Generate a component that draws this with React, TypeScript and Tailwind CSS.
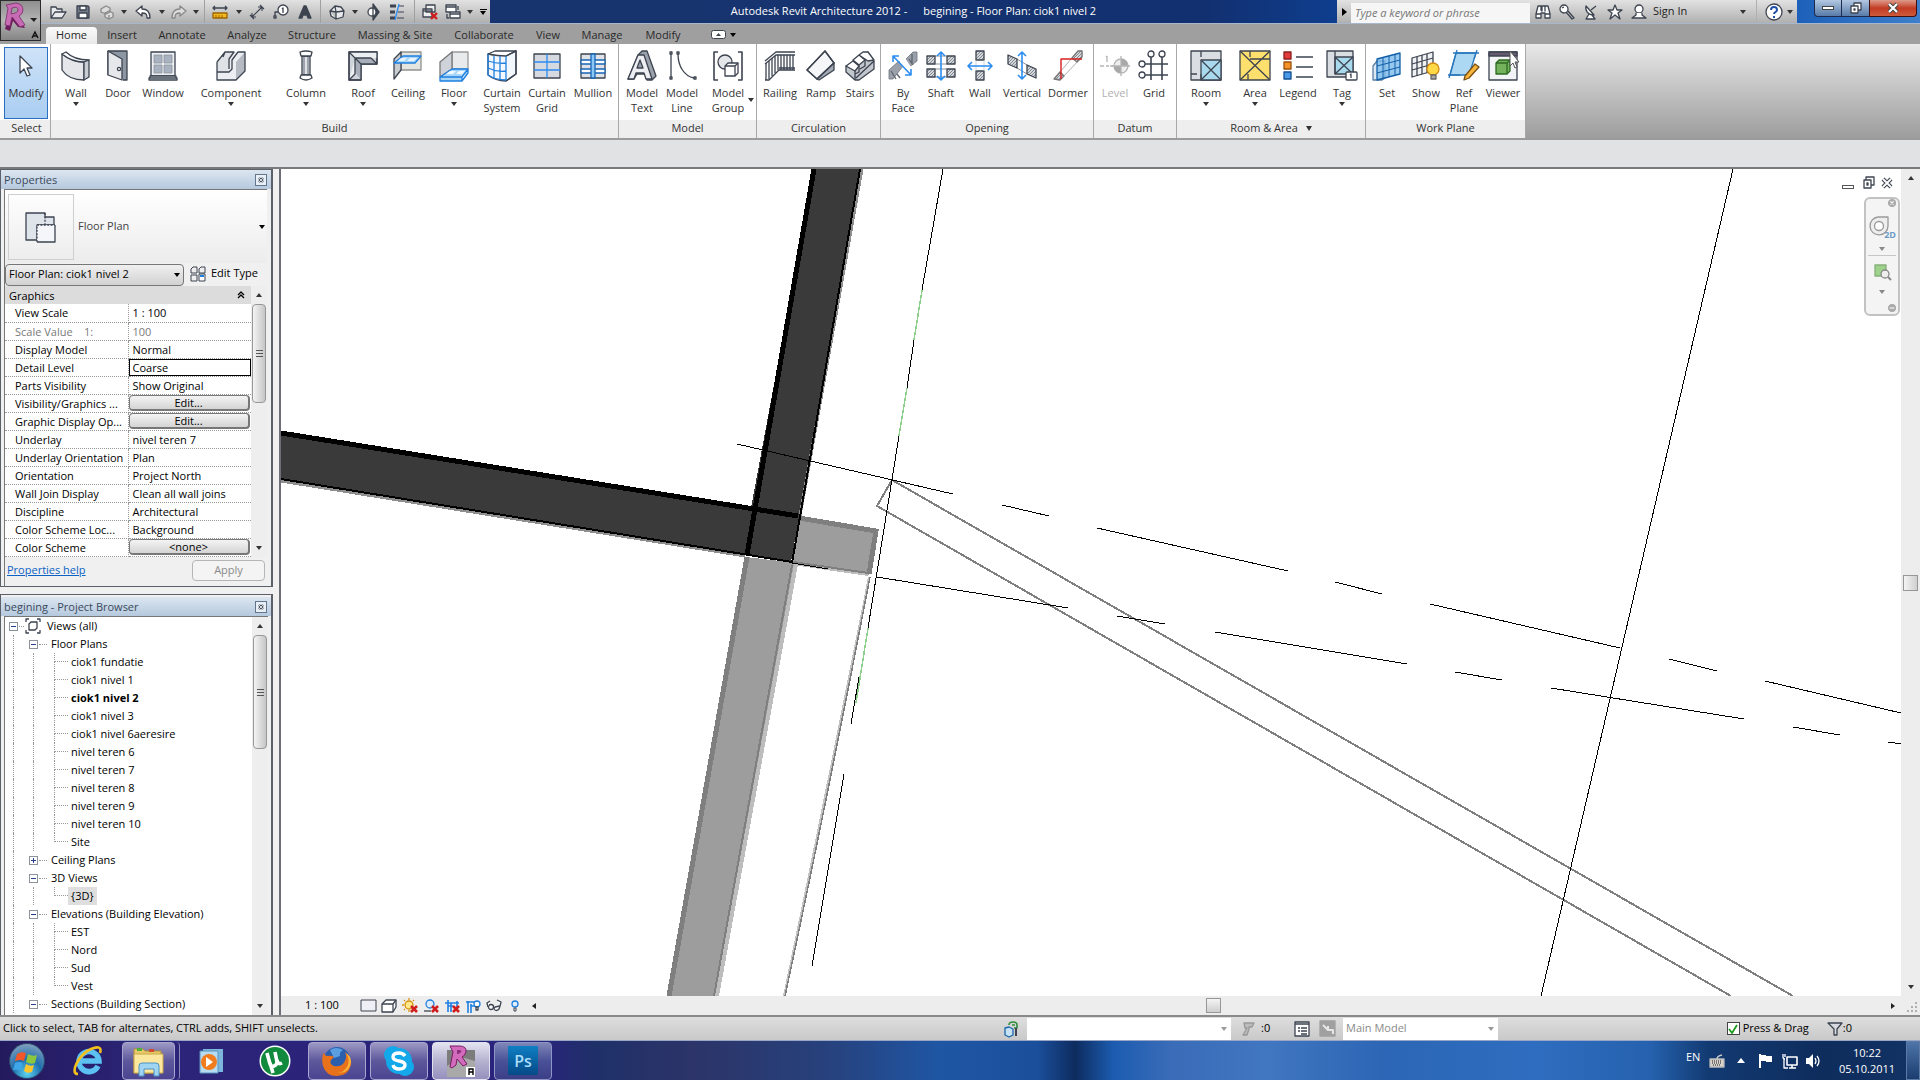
import React from 'react';

const INK = '#3d4450';
const BLUE = '#1f7fe0';

const Svg = ({ children, className = 'w-8 h-8', box = 32 }: { children: React.ReactNode; className?: string; box?: number }) => (
  <svg viewBox={`0 0 ${box} ${box}`} className={`${className} shrink-0 overflow-visible`} fill="none" stroke={INK} strokeWidth="1.3" strokeLinejoin="round" aria-hidden="true">
    {children}
  </svg>
);

const Caret = ({ className = 'border-t-[#333]' }: { className?: string }) => (
  <span className={`block w-0 h-0 shrink-0 border-x-[3px] border-x-transparent border-t-[4px] ${className}`} />
);

const hatch = (
  <pattern id="hatch" width="3" height="3" patternUnits="userSpaceOnUse">
    <rect width="3" height="3" fill="#d4d7dc" stroke="none" />
    <path d="M0 3L3 0" stroke="#6f757e" strokeWidth=".8" />
  </pattern>
);

const icons: Record<string, React.ReactNode> = {
  modify: <path d="M10 6v17l4-4 3 7 3-1-3-7h5z" fill="#fff" />,
  wall: (
    <>
      <path d="M2 4C7 8 14 12 24 12v18C14 30 6 26 2 20z" fill="#e4e6ea" />
      <path d="M2 4l4-2c5 5 12 8 23 8l-5 2C14 12 7 8 2 4z" fill="#fff" />
      <path d="M24 12l5-2v17l-5 3z" fill="#c9cdd4" />
    </>
  ),
  door: (
    <>
      <path d="M6 1h19v29h-4M6 1v24" fill="#8d96a3" />
      <path d="M6 1l14 8v21L6 25z" fill="#e6e8ec" />
      <circle cx="17" cy="19" r="1.6" fill="#fff" />
    </>
  ),
  window: (
    <>
      <rect x="4" y="2" width="24" height="24" fill="#eceef1" />
      <path d="M7 5h8v8H7zM17 5h8v8h-8zM7 15h8v8H7zM17 15h8v8h-8z" fill="#a9b2c0" stroke="#8c93a0" strokeWidth=".8" />
      <path d="M3 26h26v2H3zM2 28h28v2H2z" fill="#fff" />
    </>
  ),
  component: (
    <>
      <path d="M2 12L10 2h20v19l-9 9H2z" fill="#eceef1" stroke="none" />
      <path d="M30 2v19l-9 9V12z" fill="#b5bac3" stroke="none" />
      <path d="M2 12l8-10h9l-4 6v10l-3 3H2z" fill="#dfe2e7" stroke="none" />
      <path d="M2 12v18h19l9-9V2h-7l-6 8v9l-3 3H2M2 12l8-10h9l-5 7v10M10 2l-2 5" />
    </>
  ),
  column: (
    <>
      <path d="M12 6h8v19h-8z" fill="#dfe2e6" />
      <path d="M14 6v19M18 6v19" strokeWidth=".8" />
      <path d="M10 2q6-2 12 0l-1 4H11zM11 25h10l1 3q-6 4-12 0z" fill="#fff" />
    </>
  ),
  roof: (
    <>
      <path d="M2 2h28v12H14v16H2z" fill="#cfd3da" />
      <path d="M2 2l6 6h22V2zM8 8v16l-6 6" fill="#eceef1" stroke="none" />
      <path d="M14 14H30L24 8H8l6 6zM14 14v16l-6-8V8z" fill="#a9afb9" stroke="none" />
      <path d="M2 2h28v12H14v16H2zM2 2l12 12M30 14l-6-6h-16v16l-6 6" />
    </>
  ),
  ceiling: (
    <>
      <path d="M9 2h20v18H9z" fill="#e4e5e0" stroke="#8f9290" />
      <path d="M2 9L9 2v18l-7 9z" fill="#c9ccd1" />
      <path d="M2 13L11 6h18l-6 7z" fill="#a7d6f8" stroke={BLUE} />
      <path d="M9 8h6l-3 3H6zM18 8h7l-3 3h-7z" fill="#e8f5ff" stroke="none" />
    </>
  ),
  floor: (
    <>
      <path d="M14 2h16v17H14z" fill="#e9eaec" stroke="#999" />
      <path d="M2 12L14 2v17L2 27z" fill="#cfd3d9" stroke="#777" />
      <path d="M2 27l12-8h16l-6 8zM2 27v4h22v-4M24 31l6-8v-4" fill="#a7d6f8" stroke={BLUE} />
      <path d="M12 21h6l-3 3H8zM21 21h6l-3 3h-6z" fill="#f1f9ff" stroke="none" />
    </>
  ),
  curtainSystem: (
    <>
      <path d="M2 4C12 6 20 6 30 1v23l-10 7C13 31 7 29 2 25z" fill="#f2f8fd" />
      <path d="M2 4l7-3h21L20 6C13 6 7 5 2 4z" fill="#fff" />
      <path d="M2 11c6 2 12 3 18 2M2 18c6 3 12 4 18 3M2 25c6 4 12 5 18 5M2 4v21M8 6v22M14 6v24M20 6v25" stroke={BLUE} />
      <path d="M20 6L30 1v23l-10 7" />
    </>
  ),
  curtainGrid: (
    <>
      <rect x="3" y="4" width="26" height="24" fill="#d6dae0" />
      <path d="M16 4v24M3 12h26M3 20h26" stroke="#2b8cf2" />
    </>
  ),
  mullion: (
    <>
      <rect x="4" y="4" width="24" height="24" fill="#dfe2e7" />
      <path d="M4 10h24v4H4zM4 19h24v4H4z" fill="#fff" stroke="#1766b5" />
      <path d="M14 4h4v24h-4z" fill="#8dc7f5" stroke="#1766b5" />
    </>
  ),
  modelText: (
    <>
      <path d="M2 29L12 5l4-4h5l9 25-4 4h-5l-2-6h-8l-3 5z" fill="#9ca2ac" />
      <path d="M2 29L12 5h6l8 24h-6l-2-6h-8l-2 6zM11 18h6l-3-8z" fill="#eceef1" />
    </>
  ),
  modelLine: (
    <>
      <path d="M5 4v24M12 4c0 12 6 22 16 24" />
      <path d="M4 2h2v2H4zM4 27h2v2H4zM11 2h2v2h-2zM28 27h2v2h-2z" fill="#fff" />
    </>
  ),
  modelGroup: (
    <>
      <path d="M6 2H2v28h4M26 2h4v28h-4" strokeWidth="1.6" />
      <circle cx="13" cy="12" r="7" fill="#e4e6ea" />
      <path d="M13 16l3-3h10v10l-3 3H13z" fill="#fff" />
      <path d="M13 16h10v10M23 16l3-3" />
    </>
  ),
  railing: (
    <>
      <path d="M1 11L12 2h19M1 14L12 5h19M1 30h4L15 20h16M15 18h16" />
      <path d="M2 13v17M5 11v18M8 8v18M11 6v17M14 5v15M17 5v15M20 5v15M23 5v15M26 5v15M29 5v15" />
    </>
  ),
  ramp: (
    <>
      <path d="M2 20L20 1l9 12-17 16z" fill="#f5f6f7" />
      <path d="M12 29l17-16v7L14 30z" fill="#a4aab4" />
      <path d="M2 20L20 1l9 12-17 16z" />
    </>
  ),
  stairs: (
    <>
      <path d="M2 16h7v-5h6V6h6l3-4 6 9v8L15 30h-4L2 22z" fill="#c2c6cd" />
      <path d="M2 16l7-5 6 5-4 5zM9 10l6-5 6 5-6 5zM15 5l4-3h5l6 8-6 1z" fill="#fff" />
      <path d="M11 21v9M15 16v6l-4 2M21 10v6l-5 3M30 11L12 28" />
    </>
  ),
  byFace: (
    <>
      {hatch}
      <path d="M2 29V20l10-9 4 5L6 29zM18 10l8-8h4v9l-9 7z" fill="#9ba1aa" stroke="#6b717b" strokeWidth=".8" />
      <path d="M10 24l3 4M4 21l5 8M22 9l4 6M25 4v9" stroke="#5d636c" />
      <path d="M12 12l6-4 6 9-5 5z" fill="#fff" stroke="none" />
      <path d="M6 6l18 19M6 12V6h6M24 19v6h-6" stroke="#2b8cf2" strokeWidth="1.6" />
    </>
  ),
  shaft: (
    <>
      <path d="M2 6h8v8H2zM22 6h8v8h-8zM2 19h8v8H2zM22 19h8v8h-8z" fill="url(#hatch)" />
      <path d="M10 6h12M10 14h12M10 19h12M10 27h12" strokeWidth=".6" />
      <path d="M16 2v28M12 6l4-4 4 4M12 26l4 4 4-4" stroke="#2b8cf2" strokeWidth="1.6" />
    </>
  ),
  openWall: (
    <>
      <path d="M12 1h8v9h-8zM12 21h8v9h-8z" fill="url(#hatch)" />
      <path d="M12 10v11M20 10v11" stroke="#bbb" strokeWidth=".6" />
      <path d="M5 16h22M8 12l-4 4 4 4M24 12l4 4-4 4" stroke="#2b8cf2" strokeWidth="1.6" />
    </>
  ),
  vertical: (
    <>
      <path d="M2 5l9 4v9l-9-4zM21 15l9 4v9l-9-4z" fill="url(#hatch)" />
      <path d="M11 9l10 6M11 18l10 6" strokeWidth=".6" />
      <path d="M16 2v27M12 6l4-4 4 4M12 25l4 4 4-4" stroke="#2b8cf2" strokeWidth="1.6" />
    </>
  ),
  dormer: (
    <>
      <path d="M2 29L26 1h4v6L8 30z" fill="#fff" stroke="#999" strokeWidth=".8" />
      <path d="M20 8l6-7h4v6l-5 5zM2 29l6-7 4 4-4 4z" fill="url(#hatch)" stroke="#777" />
      <path d="M9 29V9h21" stroke="#d8201f" strokeWidth="1.4" />
    </>
  ),
  level: (
    <g stroke="#b5b5b5">
      <path d="M1 16h4M7 16h3M11 16h3M8 6v6M7 7l1-1" />
      <circle cx="22" cy="16" r="7" fill="#eee" />
      <path d="M22 9v7h7a7 7 0 0 0-7-7zM22 23v-7h-7a7 7 0 0 0 7 7z" fill="#a8a8a8" stroke="none" />
      <path d="M22 6v20M13 16h18" />
    </g>
  ),
  grid: (
    <>
      <path d="M13 7v23M24 7v23M7 14h23M7 25h23" strokeWidth="1.6" />
      <circle cx="13" cy="4" r="3" fill="#fff" />
      <circle cx="24" cy="4" r="3" fill="#fff" />
      <circle cx="4" cy="14" r="3" fill="#fff" />
      <circle cx="4" cy="25" r="3" fill="#fff" />
    </>
  ),
  room: (
    <>
      <rect x="1" y="1" width="30" height="29" fill="#dadee3" />
      <rect x="11" y="10" width="20" height="20" fill="#a8d9ec" />
      <path d="M11 1v6M1 24h6M11 24v6M11 10l20 20M31 10L11 30" />
    </>
  ),
  area: (
    <>
      <rect x="1" y="1" width="30" height="29" fill="#fddf6d" />
      <path d="M1 1l30 29M31 1L1 30M11 1v6M11 9h14M9 24v6M25 9h6" />
    </>
  ),
  legend: (
    <>
      <rect x="2" y="2" width="7" height="7" fill="#e23b3b" stroke="#8c1d1d" />
      <rect x="2" y="12" width="7" height="7" fill="#f6922a" stroke="#9a5209" />
      <rect x="2" y="22" width="7" height="7" fill="#4a9ae8" stroke="#134f92" />
      <path d="M14 7h17M14 17h17M14 27h17" />
    </>
  ),
  tag: (
    <>
      <rect x="1" y="1" width="26" height="26" fill="#dadee3" />
      <path d="M9 7h18v17H9z" fill="#a8d9ec" />
      <path d="M9 1v23M9 7l18 17M27 7L9 24" />
      <rect x="20" y="22" width="11" height="8" rx="1" fill="#fff" />
      <path d="M25 28v-4l-1 1" />
    </>
  ),
  set: (
    <>
      <path d="M2 16l4-5h8v17l-3 2H2z" fill="#dce9f4" stroke="#5a7ea3" />
      <path d="M6 9l23-6v21L6 30z" fill="#7dbcec" fillOpacity=".8" stroke="#125fa8" />
      <path d="M12 7v21M18 6v21M24 4v21M6 16l23-6M6 23l23-6" stroke="#125fa8" strokeWidth="1" />
    </>
  ),
  show: (
    <>
      <path d="M2 8l21-6v19L2 27z" fill="#f1f2f4" />
      <path d="M7 7v19M12 5v19M17 4v19M2 14l21-6M2 20l21-6" />
      <circle cx="23" cy="19" r="6" fill="#ffd845" stroke="#d28a10" />
      <path d="M21 25h5v4h-5z" fill="#aaa" stroke="#666" />
    </>
  ),
  refPlane: (
    <>
      <path d="M8 3h20l-7 22H2z" fill="#add8f4" stroke="#2a78bd" />
      <path d="M5 3h26M9 0L1 28M0 25h12M29 0l-3 9" stroke="#2a78bd" />
      <path d="M17 26L27 14l4 3-10 11-5 2z" fill="#f7b53c" stroke="#7a4f12" />
    </>
  ),
  viewer: (
    <>
      <rect x="2" y="2" width="28" height="28" fill="#f3f4f5" />
      <path d="M2 2h28v4H2z" fill="#655a70" />
      <path d="M9 13l3-3h11v11l-3 3H9z" fill="#74b35c" stroke="#2c6a22" />
      <path d="M9 13h11v11M20 13l3-3" stroke="#2c6a22" />
      <path d="M23 1v15l3-3 2 5 2-1-2-5h4z" fill="#fff" stroke="#555" strokeWidth="1" />
    </>
  ),
};

type Tool = { icon: string; label: string; sub?: string; w: string; drop?: boolean; off?: boolean };

const panels: { title: string; w: string; tools: Tool[]; more?: boolean }[] = [
  {
    title: 'Build', w: 'w-[568px]', tools: [
      { icon: 'wall', label: 'Wall', w: 'w-[48px]', drop: true },
      { icon: 'door', label: 'Door', w: 'w-[36px]' },
      { icon: 'window', label: 'Window', w: 'w-[54px]' },
      { icon: 'component', label: 'Component', w: 'w-[82px]', drop: true },
      { icon: 'column', label: 'Column', w: 'w-[68px]', drop: true },
      { icon: 'roof', label: 'Roof', w: 'w-[46px]', drop: true },
      { icon: 'ceiling', label: 'Ceiling', w: 'w-[44px]' },
      { icon: 'floor', label: 'Floor', w: 'w-[48px]', drop: true },
      { icon: 'curtainSystem', label: 'Curtain', sub: 'System', w: 'w-[48px]' },
      { icon: 'curtainGrid', label: 'Curtain', sub: 'Grid', w: 'w-[42px]' },
      { icon: 'mullion', label: 'Mullion', w: 'w-[50px]' },
    ],
  },
  {
    title: 'Model', w: 'w-[138px]', tools: [
      { icon: 'modelText', label: 'Model', sub: 'Text', w: 'w-[44px]' },
      { icon: 'modelLine', label: 'Model', sub: 'Line', w: 'w-[36px]' },
      { icon: 'modelGroup', label: 'Model', sub: 'Group', w: 'w-[56px]', drop: true },
    ],
  },
  {
    title: 'Circulation', w: 'w-[124px]', tools: [
      { icon: 'railing', label: 'Railing', w: 'w-[44px]' },
      { icon: 'ramp', label: 'Ramp', w: 'w-[38px]' },
      { icon: 'stairs', label: 'Stairs', w: 'w-[40px]' },
    ],
  },
  {
    title: 'Opening', w: 'w-[213px]', tools: [
      { icon: 'byFace', label: 'By', sub: 'Face', w: 'w-[42px]' },
      { icon: 'shaft', label: 'Shaft', w: 'w-[34px]' },
      { icon: 'openWall', label: 'Wall', w: 'w-[44px]' },
      { icon: 'vertical', label: 'Vertical', w: 'w-[40px]' },
      { icon: 'dormer', label: 'Dormer', w: 'w-[52px]' },
    ],
  },
  {
    title: 'Datum', w: 'w-[83px]', tools: [
      { icon: 'level', label: 'Level', w: 'w-[40px]', off: true },
      { icon: 'grid', label: 'Grid', w: 'w-[38px]' },
    ],
  },
  {
    title: 'Room & Area', w: 'w-[189px]', more: true, tools: [
      { icon: 'room', label: 'Room', w: 'w-[56px]', drop: true },
      { icon: 'area', label: 'Area', w: 'w-[42px]', drop: true },
      { icon: 'legend', label: 'Legend', w: 'w-[44px]' },
      { icon: 'tag', label: 'Tag', w: 'w-[44px]', drop: true },
    ],
  },
  {
    title: 'Work Plane', w: 'w-[160px]', tools: [
      { icon: 'set', label: 'Set', w: 'w-[40px]' },
      { icon: 'show', label: 'Show', w: 'w-[38px]' },
      { icon: 'refPlane', label: 'Ref', sub: 'Plane', w: 'w-[38px]' },
      { icon: 'viewer', label: 'Viewer', w: 'w-[40px]' },
    ],
  },
];

const tabs = [
  { label: 'Insert', w: 'w-[50px]' },
  { label: 'Annotate', w: 'w-[70px]' },
  { label: 'Analyze', w: 'w-[60px]' },
  { label: 'Structure', w: 'w-[70px]' },
  { label: 'Massing & Site', w: 'w-[96px]' },
  { label: 'Collaborate', w: 'w-[82px]' },
  { label: 'View', w: 'w-[46px]' },
  { label: 'Manage', w: 'w-[62px]' },
  { label: 'Modify', w: 'w-[60px]' },
];

const quick: { w: string; name: string; art: React.ReactNode }[] = [
  { name: 'Open', w: 'w-6', art: <path d="M1 14V3h5l1 2h5v3M1 14l4-6h11l-4 6z" fill="#e8eaed" /> },
  { name: 'Save', w: 'w-[26px]', art: <><path d="M2 2h11l1 1v11H2z" fill="#737a88" /><path d="M5 2h6v4H5zM4 9h8v5H4z" fill="#fff" /></> },
  { name: 'Synchronize', w: 'w-[22px]', art: <g stroke="#888"><path d="M2 5l5-3 4 2v4l-4 2-5-2zM6 9l4-2 4 2v4l-4 2-4-2z" fill="#ddd" /><path d="M10 11v4" /></g> },
  { name: 'v', w: 'w-3', art: null },
  { name: 'Undo', w: 'w-[26px]', art: <path d="M1 7l6-5v3c5 0 8 2 8 9h-3c0-4-1-5-5-5v3z" fill="#fff" /> },
  { name: 'v', w: 'w-3', art: null },
  { name: 'Redo', w: 'w-[23px]', art: <path d="M15 7L9 2v3c-5 0-8 2-8 9h3c0-4 1-5 5-5v3z" fill="#ddd" stroke="#888" /> },
  { name: 'v', w: 'w-3', art: null },
  { name: '|', w: 'w-[5px]', art: null },
  { name: 'Measure', w: 'w-[26px]', art: <><path d="M1 4h14M3 2L1 4l2 2M13 2l2 2-2 2" /><path d="M1 9h14v5H1z" fill="#f5b81e" stroke="#9a6400" /><path d="M4 11v3M7 11v3M10 11v3" stroke="#9a6400" strokeWidth="1" /></> },
  { name: 'v', w: 'w-3', art: null },
  { name: 'Aligned Dimension', w: 'w-6', art: <path d="M3 13L13 3M3 9v4h4M9 3h4v4M1 11l4 4M11 1l4 4" strokeWidth="1.1" /> },
  { name: 'Tag', w: 'w-6', art: <><circle cx="10" cy="6" r="5" fill="#fff" /><path d="M10 9V4l-1 1M5 8H2v4" /><path d="M1 12h2v2H1z" fill="#fff" /></> },
  { name: 'Text', w: 'w-6', art: <path d="M2 14L7 2h2l5 12h-3l-1-3H6l-1 3zM7 9h2L8 6z" fill={INK} /> },
  { name: '|', w: 'w-2', art: null },
  { name: '3D View', w: 'w-6', art: <path d="M1 7l5-5 6 1 3 4-1 6-7 2-5-3zM7 15V8L1 7M7 8l8-1M6 2l1 6" fill="#e8eaed" /> },
  { name: 'v', w: 'w-3', art: null },
  { name: 'Section', w: 'w-6', art: <><path d="M8 0l6 8-6 8z" fill={INK} /><circle cx="7" cy="8" r="4" fill="#fff" /><path d="M8 12V4" /></> },
  { name: 'Thin Lines', w: 'w-[26px]', art: <><path d="M1 2h6M1 8h5M1 14h5" strokeWidth="3" /><path d="M10 2h5M9 8h6M8 14h7" strokeWidth="1" /><path d="M10 0L6 16" stroke="#2b8cf2" /></> },
  { name: '|', w: 'w-2', art: null },
  { name: 'Close Hidden', w: 'w-6', art: <><path d="M4 1h9v7H4zM1 5h9v8H1z" fill="#eee" /><path d="M1 7h9" /><path d="M9 9l6 6M15 9l-6 6" stroke="#d01c1c" strokeWidth="2.4" /></> },
  { name: 'Switch Windows', w: 'w-[22px]', art: <><path d="M1 1h10v7H1zM5 8h10v6H5z" fill="#fff" /><path d="M1 3h10M5 10h10" /><path d="M13 2v4M2 10v4h2" /></> },
  { name: 'v', w: 'w-3', art: null },
];

const props: [string, string][] = [
  ['View Scale', '1 : 100'],
  ['Scale Value    1:', '100'],
  ['Display Model', 'Normal'],
  ['Detail Level', 'Coarse'],
  ['Parts Visibility', 'Show Original'],
  ['Visibility/Graphics ...', 'Edit...'],
  ['Graphic Display Op...', 'Edit...'],
  ['Underlay', 'nivel teren 7'],
  ['Underlay Orientation', 'Plan'],
  ['Orientation', 'Project North'],
  ['Wall Join Display', 'Clean all wall joins'],
  ['Discipline', 'Architectural'],
  ['Color Scheme Loc...', 'Background'],
  ['Color Scheme', '<none>'],
];

const tree: { name: string; open: boolean; kids: string[] }[] = [
  {
    name: 'Floor Plans', open: true,
    kids: ['ciok1 fundatie', 'ciok1 nivel 1', 'ciok1 nivel 2', 'ciok1 nivel 3', 'ciok1 nivel 6aeresire', 'nivel teren 6', 'nivel teren 7', 'nivel teren 8', 'nivel teren 9', 'nivel teren 10', 'Site'],
  },
  { name: 'Ceiling Plans', open: false, kids: [] },
  { name: '3D Views', open: true, kids: ['{3D}'] },
  { name: 'Elevations (Building Elevation)', open: true, kids: ['EST', 'Nord', 'Sud', 'Vest'] },
  { name: 'Sections (Building Section)', open: true, kids: [] },
];

const TitleBar = () => (
  <div className="flex h-[24px] items-stretch bg-[linear-gradient(90deg,#17346f_0%,#17346f_35%,#123070_62%,#0b4aa8_75%,#0a50b0_90%,#3f7fcb_100%)] border-b border-[#a9b7cd]">
    <div className="flex w-[449px] shrink-0 items-center bg-gradient-to-b from-[#e2e2e2] to-[#b0b0b0] pl-[5px]">
      {quick.map((q, i) => {
        if (q.name === '|') return <span key={i} className={`${q.w} flex h-full justify-center`}><span className="w-px bg-[#a0a0a0]" /></span>;
        if (q.name === 'v') return <button key={i} aria-label="More" className={`${q.w} flex h-full items-center justify-center`}><Caret /></button>;
        return (
          <button key={i} aria-label={q.name} className={`${q.w} flex h-full items-center justify-center`}>
            <Svg box={16} className="w-4 h-4">{q.art}</Svg>
          </button>
        );
      })}
      <button aria-label="Customize" className="flex w-[14px] flex-col items-center gap-px">
        <span className="h-px w-[7px] bg-black" />
        <Caret className="border-t-black" />
      </button>
    </div>
    <h1 className="flex flex-1 items-center justify-center gap-4 text-[11px] text-white whitespace-nowrap">
      <span>Autodesk Revit Architecture 2012 -</span>
      <span>begining - Floor Plan: ciok1 nivel 2</span>
    </h1>
    <div className="flex w-[460px] shrink-0 items-center bg-gradient-to-b from-[#e2e2e2] to-[#b0b0b0]">
      <span className="mr-1 ml-[5px] block h-0 w-0 border-y-4 border-l-[5px] border-y-transparent border-l-black" />
      <input aria-label="Search" placeholder="Type a keyword or phrase" className="mt-[2px] h-5 w-[179px] bg-[#f6f6f6] px-1 text-[11px] italic placeholder:text-[#777] outline-none" />
      <div className="flex items-center gap-2 pl-[5px]">
        <button aria-label="Find"><Svg box={16} className="w-4 h-4"><path d="M3 2h3v4l1 1V2h3v5l0-5h3l2 8v4h-5v-5H6v5H1v-4z" fill="#fff" /><path d="M1 10h5M10 10h5" /></Svg></button>
        <button aria-label="Key"><Svg box={16} className="w-4 h-4"><circle cx="5" cy="5" r="4" fill="#fff" /><path d="M7 8l6 7 2-1-6-7M3 4l2-1" /></Svg></button>
        <button aria-label="Communication Center"><Svg box={16} className="w-4 h-4"><path d="M3 2c-1 5 2 9 8 9L3 2zM8 6l5-4M6 10l-3 5h9l-3-4" fill="#fff" /></Svg></button>
        <button aria-label="Favorites"><Svg box={16} className="w-4 h-4"><path d="M8 1l2 5h5l-4 3 2 6-5-4-5 4 2-6-4-3h5z" fill="#fff" /></Svg></button>
        <button className="flex items-center gap-[6px] text-[11px] text-[#222] whitespace-nowrap">
          <Svg box={16} className="w-4 h-4"><circle cx="8" cy="5" r="4" fill="#fff" /><path d="M5 9v2l-4 3h14l-4-3V9" fill="#fff" /></Svg>
          Sign In
        </button>
      </div>
      <span className="flex-1" />
      <Caret />
      <span className="mr-2 ml-[10px] h-full w-px bg-[#b0b0b0]" />
      <button aria-label="Help">
        <Svg box={18} className="w-[18px] h-[18px]"><circle cx="9" cy="9" r="8" fill="#fff" /><path d="M6 7c0-4 6-4 6 0 0 2-3 2-3 4M9 13v2" stroke="#1d4fa8" strokeWidth="2" /></Svg>
      </button>
      <span className="mx-1"><Caret /></span>
    </div>
    <div className="flex w-[123px] shrink-0 items-start justify-end pr-[3px]">
      <button aria-label="Minimize" className="flex h-[17px] w-[28px] items-center justify-center rounded-bl border border-t-0 border-[#1c2c4c] bg-gradient-to-b from-[#b3c8e2] to-[#587ba8]"><span className="h-1 w-3 border border-[#444] bg-white" /></button>
      <button aria-label="Restore" className="flex h-[17px] w-[27px] items-center justify-center border-b border-[#1c2c4c] bg-gradient-to-b from-[#b3c8e2] to-[#587ba8]">
        <Svg box={12} className="w-3 h-3"><path d="M4 1h7v7H4z" fill="#fff" /><path d="M1 4h7v7H1z" fill="#fff" /><path d="M4 7h1v1H4z" /></Svg>
      </button>
      <button aria-label="Close" className="flex h-[17px] w-[48px] items-center justify-center rounded-br border border-t-0 border-[#401010] bg-gradient-to-b from-[#dc9a8c] via-[#c23a22] to-[#cf5a3c]">
        <Svg box={12} className="w-3 h-3"><path d="M2 2l8 8M10 2l-8 8" stroke="#444" strokeWidth="4" /><path d="M2 2l8 8M10 2l-8 8" stroke="#fff" strokeWidth="2.2" /></Svg>
      </button>
    </div>
  </div>
);

const TabRow = () => (
  <nav className="flex h-5 items-end bg-[#9f9f9f] text-[11px] text-[#2a2a2a]">
    <button className="ml-[5px] h-[17px] w-[51px] rounded-t-sm bg-gradient-to-b from-[#fafafa] to-[#e9e9e9] pb-[2px] leading-[15px]">Home</button>
    {tabs.map((t) => (
      <button key={t.label} className={`${t.w} h-[17px] pb-[2px] leading-[15px] whitespace-nowrap`}>{t.label}</button>
    ))}
    <button aria-label="Minimize ribbon" className="mb-[5px] ml-[18px] flex items-center gap-1">
      <svg viewBox="0 0 15 9" className="h-[9px] w-[15px]"><rect x=".5" y=".5" width="14" height="8" rx="2" fill="#fff" stroke={INK} /><path d="M5 6l2.500-3L10 6z" fill={INK} /></svg>
      <Caret className="border-t-black" />
    </button>
  </nav>
);

const ToolButton = ({ tool }: { tool: Tool }) => (
  <button disabled={tool.off} className={`${tool.w} relative flex shrink-0 flex-col items-center pt-[6px] text-[11px] leading-[15px] whitespace-nowrap ${tool.off ? 'text-[#b0b0b0]' : 'text-[#333]'}`}>
    <Svg>{icons[tool.icon]}</Svg>
    <span className="mt-[3px]">{tool.label}</span>
    {tool.sub && <span>{tool.sub}</span>}
    {tool.drop && !tool.sub && <span className="mt-[2px]"><Caret /></span>}
    {tool.drop && tool.sub && <span className="absolute right-[2px] bottom-[18px]"><Caret /></span>}
  </button>
);

const Ribbon = () => (
  <div className="flex h-[94px] bg-gradient-to-b from-[#e8e8e8] to-[#9d9d9d]">
    <section className="flex w-[51px] shrink-0 flex-col border-r border-[#a8a8a8] bg-white">
      <div className="flex-1 pt-[3px] pl-1">
        <button className="flex h-[72px] w-[44px] flex-col items-center border border-[#2a6fc0] bg-gradient-to-b from-[#cfe3f8] to-[#a9cdf1] pt-[2px] text-[11px] leading-[15px] text-[#333]">
          <Svg>{icons.modify}</Svg>
          <span className="mt-[3px]">Modify</span>
        </button>
      </div>
      <h2 className="h-[18px] bg-[#eeeeee] pl-[3px] text-center text-[11px] leading-4 text-[#333]">Select</h2>
    </section>
    {panels.map((p) => (
      <section key={p.title} className={`${p.w} flex shrink-0 flex-col border-r border-[#a8a8a8] bg-white`}>
        <div className="flex flex-1 pl-px">
          {p.tools.map((t) => <ToolButton key={t.icon} tool={t} />)}
        </div>
        <h2 className="flex h-[18px] items-start justify-center gap-1 bg-[#eeeeee] text-[11px] leading-4 text-[#333]">
          {p.title}
          {p.more && <span className="mt-[6px] ml-1"><Caret className="border-x-4 border-t-[5px] border-t-[#333]" /></span>}
        </h2>
      </section>
    ))}
  </div>
);

const PaneTitle = ({ children }: { children: React.ReactNode }) => (
  <div className="flex h-[19px] shrink-0 items-center justify-between bg-gradient-to-b from-[#dce6f0] to-[#b5c9de] pr-1 pl-[3px] text-[11px] leading-4 text-[#3a4a5c]">
    <h2>{children}</h2>
    <button aria-label="Close panel" className="flex h-3 w-3 items-center justify-center border border-[#64768c] bg-[#e8eff6]">
      <Svg box={8} className="w-2 h-2"><path d="M2 2l4 4M6 2L2 6" strokeWidth="2.4" /><path d="M2 2l4 4M6 2L2 6" stroke="#fff" strokeWidth=".8" /></Svg>
    </button>
  </div>
);

const ScrollTrack = ({ thumb }: { thumb: string }) => (
  <div className="flex w-4 shrink-0 flex-col items-center bg-[#eeeeee]">
    <span className="my-[7px] block h-0 w-0 border-x-[3px] border-b-4 border-x-transparent border-b-[#333]" />
    <span className={`${thumb} flex w-[14px] flex-col items-center justify-center gap-[2px] rounded-sm border border-[#979797] bg-gradient-to-r from-[#f4f4f4] to-[#c6c6c6]`}>
      <span className="h-px w-[7px] bg-[#555]" />
      <span className="h-px w-[7px] bg-[#555]" />
      <span className="h-px w-[7px] bg-[#555]" />
    </span>
    <span className="flex-1" />
    <span className="mb-[7px]"><Caret /></span>
  </div>
);

const PropValue = ({ name, value }: { name: string; value: string }) => {
  if (value === 'Edit...' || value === '<none>') {
    return <button className="block h-4 w-[121px] rounded-sm border border-r-2 border-b-2 border-[#777] bg-gradient-to-b from-[#f4f4f4] to-[#d4d4d4] text-center leading-[13px]">{value}</button>;
  }
  if (name === 'Detail Level') return <div className="h-[17px] border border-black pl-[3px] leading-[15px]">{value}</div>;
  return <div className="pl-1">{value}</div>;
};

const PropertiesPane = () => (
  <section className="flex h-[418px] w-[273px] shrink-0 flex-col border border-r-2 border-[#5b606b] bg-[#f0f0f0]">
    <PaneTitle>Properties</PaneTitle>
    <div className="mr-1 ml-[3px] flex flex-1 flex-col border-t border-l border-[#777]">
      <button className="flex h-[73px] items-center bg-gradient-to-b from-white to-[#ececec] p-[3px] pr-[2px]">
        <span className="flex h-[66px] w-[66px] items-center justify-center border border-[#cfcfcf]">
          <Svg>
            <path d="M1 2h19v4h9v8H12v15H1z" fill="#dfe3ea" />
            <path d="M12 14h18v17H12z" fill="#f4f6f9" stroke="none" />
            <path d="M20 2v12M12 31V14h18" strokeDasharray="2 1.4" />
            <path d="M30 14v17H12" />
          </Svg>
        </span>
        <span className="ml-1 flex-1 text-left text-[11px] text-[#444]">Floor Plan</span>
        <Caret className="border-x-4" />
      </button>
      <div className="flex h-[23px] items-center">
        <div className="relative">
          <select aria-label="View" className="block h-[22px] w-[179px] appearance-none rounded-sm border border-[#777] bg-gradient-to-b from-[#f0f0f0] to-[#d2d2d2] pl-[3px] text-[11px]">
            <option>Floor Plan: ciok1 nivel 2</option>
          </select>
          <span className="pointer-events-none absolute top-[9px] right-1"><Caret className="border-x-4 border-t-black" /></span>
        </div>
        <button className="ml-[6px] flex items-center gap-[5px] pb-[2px] text-[11px]">
          <Svg box={16} className="w-4 h-4"><g strokeWidth="1"><path d="M1 3l2-2h4v6H1zM9 3l2-2h4v6H9zM1 9h6v6H1z" fill="#eee" /><path d="M9 8h6v7H9z" fill="#fff" /></g><path d="M10 9h4v2h-4z" fill={BLUE} stroke="none" /></Svg>
          Edit Type
        </button>
      </div>
      <div className="flex h-[271px]">
        <div className="flex-1 bg-white text-[11px] leading-[17px]">
          <div className="flex h-[18px] items-center justify-between bg-[#dcdcdc] pr-[6px] pl-1">
            <span>Graphics</span>
            <Svg box={8} className="w-2 h-2"><path d="M1 4l3-3 3 3M1 7l3-3 3 3" stroke="#000" /></Svg>
          </div>
          <table className="w-full table-fixed border-collapse">
            <tbody>
              {props.map(([name, value]) => (
                <tr key={name} className={`h-[18px] ${name.startsWith('Scale') ? 'text-[#7a7a7a]' : 'text-black'}`}>
                  <th scope="row" className="w-[123px] overflow-hidden border-r border-b border-dotted border-[#999] p-0 pl-[10px] text-left font-normal whitespace-pre">{name}</th>
                  <td className="border-b border-dotted border-[#999] p-0 whitespace-nowrap"><PropValue name={name} value={value} /></td>
                </tr>
              ))}
            </tbody>
          </table>
        </div>
        <ScrollTrack thumb="h-[99px]" />
      </div>
      <div className="flex flex-1 items-center justify-between pr-[2px] pb-[2px] pl-[2px] text-[11px]">
        <a href="#help" className="text-[#0b62c4] underline">Properties help</a>
        <button disabled className="h-[21px] w-[73px] rounded-sm border border-[#b5b5b5] bg-[#f4f4f4] text-[#8a8a8a]">Apply</button>
      </div>
    </div>
  </section>
);

const NodeBox = ({ open }: { open: boolean }) => (
  <span className="relative flex h-[9px] w-[9px] shrink-0 items-center justify-center border border-[#8d939b] bg-white">
    <span className="h-px w-[5px] bg-[#24408c]" />
    {!open && <span className="absolute h-[5px] w-px bg-[#24408c]" />}
  </span>
);

const ProjectBrowser = () => (
  <section className="flex min-h-0 w-[273px] flex-1 flex-col border border-r-2 border-b-0 border-[#5b606b] bg-[#f0f0f0] pt-[2px]">
    <PaneTitle>begining - Project Browser</PaneTitle>
    <div className="mr-[3px] ml-[3px] flex min-h-0 flex-1 border-t border-l border-[#777] bg-white">
      <ul className="flex-1 overflow-hidden text-[11px] leading-[18px] text-black whitespace-nowrap">
        <li className="flex h-[18px] items-center pl-1">
          <NodeBox open />
          <span className="mx-px w-[5px] border-t border-dotted border-[#999]" />
          <Svg box={16} className="w-4 h-4"><path d="M4 1H1v3M12 1h3v3M4 15H1v-3M12 15h3v-3M4 6l2-2h6v6l-2 2H4z" /></Svg>
          <span className="ml-[6px]">Views (all)</span>
        </li>
        {tree.map((g, gi) => (
          <li key={g.name}>
            <div className="flex h-[18px] items-center">
              <span className="ml-2 h-full w-4 border-l border-dotted border-[#999]" />
              <NodeBox open={g.open} />
              <span className="mr-1 ml-px w-2 border-t border-dotted border-[#999]" />
              <span>{g.name}</span>
            </div>
            <ul>
              {g.kids.map((k, i) => (
                <li key={k} className="flex h-[18px] items-center">
                  <span className="ml-2 h-full w-5 border-l border-dotted border-[#999]" />
                  <span className={`h-full w-[21px] ${gi < tree.length - 1 ? 'border-l border-dotted border-[#999]' : ''}`} />
                  <span className="flex h-full w-[14px] flex-col">
                    <span className="h-1/2 border-b border-l border-dotted border-[#999]" />
                    <span className={`h-1/2 ${i < g.kids.length - 1 ? 'border-l border-dotted border-[#999]' : ''}`} />
                  </span>
                  <span className={`px-[3px] ${k === 'ciok1 nivel 2' ? 'font-bold' : ''} ${k === '{3D}' ? 'bg-[#dedede]' : ''}`}>{k}</span>
                </li>
              ))}
            </ul>
          </li>
        ))}
      </ul>
      <ScrollTrack thumb="h-[114px]" />
    </div>
  </section>
);

const thinLines = [
  // first reference plane
  'M737 444L953 494', 'M1002 505L1049 516', 'M1097 528L1288 571', 'M1335 582L1382 594', 'M1430 604L1620 648', 'M1669 659L1717 671', 'M1765 681L1901 713',
  // second reference plane
  'M792 563L828 569', 'M877 577L1068 608', 'M1117 616L1165 624', 'M1215 632L1407 664', 'M1455 672L1502 680', 'M1551 688L1744 719', 'M1793 727L1840 735', 'M1888 742L1901 744',
  // steep lines
  'M1733 169L1541 996', 'M943 169L922 290', 'M914 340L907 388', 'M899 436L868 628', 'M859 677L851 724', 'M844 774L812 966',
];

const Drawing = () => (
  <svg viewBox="281 169 1620 827" preserveAspectRatio="xMinYMin slice" className="h-full w-full" shapeRendering="crispEdges" fill="none" role="img" aria-label="Floor plan">
    <path d="M746 557L797 563L716 996H667z" fill="#9d9d9d" />
    <path d="M796 564L717 996" stroke="#bdbdbd" strokeWidth="4" />
    <path d="M747 557L669 996" stroke="#7f7f7f" strokeWidth="5" />
    <path d="M792 565L714 996" stroke="#7f7f7f" strokeWidth="2" />
    <path d="M799 517L877 530L869 575L792 563z" fill="#9d9d9d" />
    <path d="M799 518L876 531L869 574" stroke="#7f7f7f" strokeWidth="5" />
    <path d="M793 562L868 573" stroke="#7f7f7f" strokeWidth="2" />
    <path d="M793 564L868 575" stroke="#bdbdbd" strokeWidth="2" />
    <path d="M814 169H861L791 562L281 479V433L751 508z" fill="#3a3a3a" />
    <path d="M281 481L745 556M862 169L800 516" stroke="#8f8f8f" strokeWidth="3" />
    <path d="M281 433L798 516M814 169L747 555" stroke="#000" strokeWidth="5" />
    <path d="M281 479L792 562M860 169L792 563" stroke="#000" strokeWidth="2" />
    <path d="M869 577Q823 810 784 996" stroke="#c4c4c4" strokeWidth="2" />
    <path d="M870 577Q825 810 785 996" stroke="#7f7f7f" strokeWidth="1.5" />
    <path d="M1793 996L892 480L877 506L1731 996" stroke="#7f7f7f" strokeWidth="2" />
    <path d="M922 290L914 340M907 388L899 436M868 628L856 703" stroke="#8fd08f" strokeWidth="1.5" />
    <path d={thinLines.join('')} stroke="#000" strokeWidth="1" />
  </svg>
);

const NavBar = () => (
  <div className="absolute top-7 right-px flex h-[119px] w-9 flex-col items-center rounded-md border-2 border-[#c2c2c2] bg-[#f4f4f4]">
    <button aria-label="Close navigation bar" className="mr-[2px] self-end">
      <Svg box={10} className="w-2 h-2"><circle cx="5" cy="5" r="4.4" fill="#aaa" stroke="#aaa" /><path d="M3 3l4 4M7 3L3 7" stroke="#fff" /></Svg>
    </button>
    <button aria-label="Steering wheel" className="relative mt-[8px] h-6 w-6">
      <Svg box={24} className="w-6 h-6">
        <g stroke="#9a9a9a"><path d="M8 2h10v9a9 9 0 1 1-10-9z" fill="#eee" /><circle cx="9" cy="11" r="4.500" fill="#fff" /></g>
      </Svg>
      <span className="absolute -right-[2px] -bottom-[2px] text-[9px] leading-3 font-bold text-[#6d9bc6]">2D</span>
    </button>
    <span className="mt-[8px]"><Caret className="border-t-[#888]" /></span>
    <span className="mt-1 h-px w-7 bg-[#c6c6c6]" />
    <button aria-label="Zoom region" className="mt-[6px]">
      <Svg box={20} className="w-5 h-5"><path d="M3 3h11v11H3z" fill="#9ed18c" stroke="#85b078" /><circle cx="13" cy="12" r="4" fill="#eee" stroke="#888" /><path d="M16 15l3 3" stroke="#888" strokeWidth="2" /></Svg>
    </button>
    <span className="mt-[8px]"><Caret className="border-t-[#888]" /></span>
    <span className="mt-auto mr-[2px] self-end pb-[2px]"><Svg box={10} className="w-2 h-2"><circle cx="5" cy="5" r="4.4" fill="#aaa" stroke="#aaa" /><path d="M2 5h6" stroke="#fff" /></Svg></span>
  </div>
);

const redX = <path d="M9 8l6 6M15 8l-6 6" stroke="#d01c1c" strokeWidth="2.6" />;

const viewTools: { name: string; art: React.ReactNode }[] = [
  { name: 'Detail level', art: <path d="M1 2h15v11H1z" fill="#eef0f5" strokeWidth="1" /> },
  { name: 'Visual style', art: <><path d="M1 6l4-4h10v7l-3 5H1z" fill="#fff" /><path d="M1 6h11v8M12 6l3-4" /></> },
  { name: 'Sun path', art: <><circle cx="7" cy="7" r="4" fill="#ffe98a" stroke="#d9920a" /><path d="M7 0v2M0 7h2M7 12v2M2 2l1 1M12 2l-1 1M2 12l1-1" stroke="#d9920a" />{redX}</> },
  { name: 'Shadows', art: <><circle cx="7" cy="6" r="4" fill="#dcecfb" stroke={BLUE} /><path d="M1 13h7" />{redX}</> },
  { name: 'Crop view', art: <><path d="M4 2v12M1 5h14M4 8h5M7 5v9M13 3v6" stroke={BLUE} strokeWidth="1.6" />{redX}</> },
  { name: 'Show crop region', art: <><path d="M3 3v12M1 4h10M6 6v9M6 8h4" stroke={BLUE} strokeWidth="1.6" /><circle cx="12" cy="6" r="3" fill="#fff" stroke={BLUE} /><path d="M11 9h2v3h-2z" fill="#fff" /></> },
  { name: 'Temporary hide', art: <><circle cx="5" cy="9" r="2.500" fill="#fff" /><path d="M8 11q2 3 5 0l1-3-5 1zM2 9L1 5l3-2M14 8l1-4-4-2M7 9l2 1" fill="#fff" /></> },
  { name: 'Reveal hidden', art: <><circle cx="8" cy="6" r="3" fill="#dff0ff" stroke={BLUE} /><path d="M7 10h2v3H7z" fill="#fff" strokeWidth="1" /></> },
];

const ViewArea = () => (
  <main className="flex min-w-0 flex-1 flex-col border-l-2 border-[#6c6f75] bg-white">
    <div className="flex min-h-0 flex-1">
      <div className="relative min-w-0 flex-1 overflow-hidden">
        <Drawing />
        <div className="absolute top-[7px] right-[7px] flex items-center gap-1">
          <button aria-label="Minimize view" className="flex h-3 w-4 items-end"><span className="h-1 w-3 border border-[#555] bg-white" /></button>
          <button aria-label="Restore view"><Svg box={14} className="w-[14px] h-[14px]"><path d="M4 1h8v8H4z" fill="#fff" /><path d="M2 4h7v8H2z" fill="#fff" /><path d="M5 7h1v2H5z" /></Svg></button>
          <button aria-label="Close view"><Svg box={14} className="w-[14px] h-[14px]"><path d="M3 3l8 8M11 3l-8 8" strokeWidth="4" /><path d="M3 3l8 8M11 3l-8 8" stroke="#fff" strokeWidth="1.8" /></Svg></button>
        </div>
        <NavBar />
      </div>
      <div className="flex w-[19px] shrink-0 flex-col items-center bg-[#ededed]">
        <span className="mt-[7px] block h-0 w-0 border-x-[3px] border-b-4 border-x-transparent border-b-[#333]" />
        <span className="flex-1" />
        <span className="h-4 w-[15px] border border-[#979797] bg-gradient-to-r from-[#f4f4f4] to-[#cfcfcf]" />
        <span className="flex-1" />
        <span className="mb-[7px]"><Caret /></span>
      </div>
    </div>
    <div className="flex h-[19px] shrink-0 items-center bg-[#ededed] pl-6 text-[11px]">
      <button className="w-[55px] text-left">1 : 100</button>
      <div className="flex gap-[5px]">
        {viewTools.map((v) => (
          <button key={v.name} aria-label={v.name}><Svg box={16} className="w-4 h-4">{v.art}</Svg></button>
        ))}
      </div>
      <span className="ml-[9px] block h-0 w-0 border-y-[3px] border-r-4 border-y-transparent border-r-[#222]" />
      <span className="w-[670px] shrink" />
      <span className="h-[15px] w-[15px] border border-[#979797] bg-gradient-to-b from-[#f4f4f4] to-[#cfcfcf]" />
      <span className="flex-1" />
      <span className="mr-[10px] block h-0 w-0 border-y-[3px] border-l-4 border-y-transparent border-l-[#222]" />
      <Svg box={12} className="mr-[3px] w-3 h-3"><path d="M2 11h2M6 11h2M10 11h2M6 7h2M10 7h2M10 3h2" stroke="#b0b0b0" strokeWidth="2" /></Svg>
    </div>
  </main>
);

const StatusBar = () => (
  <footer className="flex h-[25px] shrink-0 items-center border-t-2 border-[#8a8a8a] bg-gradient-to-b from-[#dedede] to-[#c9c9c9] text-[11px]">
    <p className="w-[1003px] pl-[3px] text-black">Click to select, TAB for alternates, CTRL adds, SHIFT unselects.</p>
    <button aria-label="Worksets"><Svg box={18} className="w-[18px] h-[18px]"><path d="M2 8l4-1 4 2v6l-4 2-4-2z" fill="#c8e2f5" stroke="#1a66a8" /><path d="M6 5c0-4 8-4 8 0v3h-3M9 5h3" stroke="#2f8f3a" strokeWidth="1.6" /><path d="M13 8v8" strokeWidth="2" /></Svg></button>
    <div className="relative ml-[6px]">
      <select aria-label="Active workset" disabled className="block h-[22px] w-[204px] appearance-none bg-white"><option></option></select>
      <span className="pointer-events-none absolute top-[9px] right-1"><Caret className="border-t-[#999]" /></span>
    </div>
    <button className="ml-[10px] flex w-[44px] items-center gap-1">
      <Svg box={16} className="w-4 h-4"><path d="M3 2h10l-2 4H8v2l-2 6H2l4-7H4z" fill="#bbb" stroke="#999" /></Svg>
      :0
    </button>
    <button aria-label="Design options" className="ml-2"><Svg box={18} className="w-[18px] h-[18px]"><rect x="2" y="2" width="14" height="14" fill="#fff" /><path d="M2 4h14M5 8h2M8 8h6M5 11h2M8 11h6M8 14h6" /></Svg></button>
    <button aria-label="Exclude options" disabled className="ml-2"><Svg box={18} className="w-[18px] h-[18px]"><rect x="1" y="1" width="15" height="15" fill="#a0a0a0" stroke="#a0a0a0" /><path d="M4 5l5 5h5v4M9 10V6" stroke="#e6e6e6" strokeWidth="2" /></Svg></button>
    <div className="relative ml-[6px]">
      <select aria-label="Design option" disabled className="block h-[22px] w-[155px] appearance-none bg-white pl-[3px] text-[#8a8a8a] opacity-100"><option>Main Model</option></select>
      <span className="pointer-events-none absolute top-[9px] right-1"><Caret className="border-t-[#999]" /></span>
    </div>
    <span className="flex-1" />
    <label className="flex items-center gap-[3px]">
      <input type="checkbox" defaultChecked className="peer sr-only" />
      <span className="flex h-[13px] w-[13px] items-center justify-center border border-[#444] bg-white">
        <Svg box={10} className="w-[10px] h-[10px]"><path d="M1 5l3 4 5-8" stroke="#1f9a1f" strokeWidth="1.8" /></Svg>
      </span>
      Press &amp; Drag
    </label>
    <button className="mr-[68px] ml-[18px] flex items-center">
      <Svg box={16} className="w-4 h-4"><path d="M1 2h14l-5 6v6H7V8z" fill="#d6dae0" /></Svg>
      :0
    </button>
  </footer>
);

const taskShell = 'border border-[#a9a6cf] rounded-sm bg-gradient-to-b from-[#9d99c4] via-[#5d579b] to-[#4b4592]';

const Taskbar = () => (
  <div className="flex h-[40px] shrink-0 items-center border-t border-[#9aa6c6] bg-[linear-gradient(90deg,#231a5e_0%,#2c2478_8%,#2a237c_28%,#1f3069_31%,#2c3468_36%,#27417c_43%,#1f56a4_49%,#1b4f9c_54%,#0d2c5f_56%,#1c5cb0_58%,#3a6cb8_61%,#4176c0_66%,#2c66b5_72%,#2f6dc0_80%,#2561ad_86%,#123a72_89%,#0e2c5c_95%,#123365_100%)]">
    <button aria-label="Start" className="flex w-[54px] justify-center">
      <svg viewBox="0 0 38 38" className="h-[38px] w-[38px]">
        <defs>
          <radialGradient id="orb" cx=".5" cy=".85" r=".9"><stop offset="0" stopColor="#5fd6ef" /><stop offset=".45" stopColor="#1e6fae" /><stop offset="1" stopColor="#8ea6bf" /></radialGradient>
        </defs>
        <circle cx="19" cy="19" r="17.500" fill="url(#orb)" stroke="#2c4566" />
        <path d="M9 12q4-3 9-1l-2 8q-4-2-9 0z" fill="#f0582a" />
        <path d="M20 12q5 3 9 1l-2 8q-4 2-9-1z" fill="#8cc63e" />
        <path d="M7 21q4-2 8 0l-2 8q-4-2-8-1z" fill="#3fa7e8" />
        <path d="M18 22q4 3 8 1l-2 7q-5 2-8-1z" fill="#fdc62f" />
      </svg>
    </button>
    <button aria-label="Internet Explorer" className="flex w-[68px] justify-center">
      <svg viewBox="0 0 34 34" className="h-[34px] w-[34px]" fill="none">
        <path d="M27 22a10 10 0 1 1 1-5H10" stroke="#5cc0f2" strokeWidth="5.5" />
        <path d="M7 30C-2 30 8 10 20 5c7-3 11-2 9 4" stroke="#f3c01c" strokeWidth="2.6" />
      </svg>
    </button>
    <button aria-label="Explorer" className={`mr-px flex h-[38px] w-[53px] items-center justify-center ${taskShell}`}>
      <svg viewBox="0 0 34 32" className="h-8 w-[34px]">
        <path d="M2 4h9l2 2h16v22H2z" fill="#e9c867" stroke="#b1903a" />
        <path d="M5 3h5v3H5z" fill="#4fae3c" /><path d="M17 4h5v3h-5z" fill="#d24b2d" />
        <path d="M2 9h29v19H2z" fill="#fbe79d" stroke="#c9a84a" />
        <path d="M7 31V21q0-3 3-3h14q3 0 3 3v10h-5v-7H12v7z" fill="#9fd4f2" stroke="#4d93c4" />
      </svg>
    </button>
    <span className="mr-[3px] h-[38px] w-1 rounded-r border-r border-[#8a87b8]" />
    <button aria-label="Media Player" className="flex w-[58px] justify-center">
      <svg viewBox="0 0 28 28" className="h-7 w-7">
        <path d="M5 2h20v23H5z" fill="#7cb6dd" /><path d="M2 4h18v22H2z" fill="#b7dcf2" stroke="#5b93bd" />
        <circle cx="11" cy="15" r="8" fill="#f07c1e" /><path d="M8 10v10l7-5z" fill="#fff" />
      </svg>
    </button>
    <button aria-label="uTorrent" className="mr-4 ml-[17px] flex w-[34px] justify-center">
      <svg viewBox="0 0 32 32" className="h-8 w-8">
        <circle cx="16" cy="16" r="15.500" fill="#fff" /><circle cx="16" cy="16" r="14" fill="#118a3e" />
        <path d="M8 8l3 11q1 3 4 2t3-4l-2-10M18 15q1 5 5 3M11 18l3 10" fill="none" stroke="#fff" strokeWidth="3.6" />
      </svg>
    </button>
    <button aria-label="Firefox" className={`mr-1 flex h-[38px] w-[58px] items-center justify-center ${taskShell}`}>
      <svg viewBox="0 0 32 32" className="h-8 w-8">
        <circle cx="16" cy="15" r="13" fill="#2b5fae" /><path d="M9 5q6-4 13 0-4 2-3 6l-6 2z" fill="#5b9fe0" />
        <path d="M3 7q0 4 4 4 3-1 6 1l-3 3q-2 4 3 6 6 1 9-2 5-6 2-12 7 6 6 13-3 11-14 11T2 21Q0 13 3 7z" fill="#e8711b" />
        <path d="M25 8q4 6 2 12-3 7-10 8 11 1 13-11 0-6-5-9z" fill="#f9b53a" />
      </svg>
    </button>
    <button aria-label="Skype" className={`mr-1 flex h-[38px] w-[58px] items-center justify-center ${taskShell}`}>
      <svg viewBox="0 0 32 32" className="h-8 w-8">
        <circle cx="10" cy="10" r="9" fill="#13a8ea" /><circle cx="22" cy="22" r="9" fill="#13a8ea" /><circle cx="16" cy="16" r="13" fill="#13a8ea" />
        <path d="M22 11q-2-3-6-3-6 0-6 4 0 3 6 4t6 4q0 4-6 4-5 0-6-4" fill="none" stroke="#fff" strokeWidth="3.4" />
      </svg>
    </button>
    <button aria-label="Revit" className="mr-1 flex h-[38px] w-[58px] items-center justify-center rounded-sm border border-[#e0e0ee] bg-gradient-to-b from-[#e4e3f0] via-[#b5b2d0] to-[#9490bd]">
      <svg viewBox="0 0 32 34" className="h-[34px] w-8">
        <path d="M2 6h28v27H2z" fill="#7c7c7c" /><path d="M2 22l14-9 14 4v16H2z" fill="#a9a9a9" /><path d="M21 23h9v10h-9z" fill="#fff" />
        <path d="M5 2h9q8 0 7 6-1 4-4 5l5 7-4 2-6-7-1 6-4 3-2-1 3-15z" fill="#d26bbb" stroke="#7a1d66" /><path d="M12 6h2q3 0 2 2t-4 2z" fill="#8b2f78" />
        <path d="M24 31v-6h4v6M24 28h4" fill="none" stroke="#000" strokeWidth="1.4" />
      </svg>
    </button>
    <button aria-label="Photoshop" className="flex h-[38px] w-[58px] items-center justify-center rounded-sm border border-[#8f95c4] bg-gradient-to-b from-[#7f86b8] via-[#4a5197] to-[#3b3f88]">
      <span className="flex h-[29px] w-[30px] items-center justify-center bg-gradient-to-b from-[#0f7fc4] to-[#064a86] text-base font-semibold text-[#a9dcfa]">Ps</span>
    </button>
    <span className="flex-1" />
    <div className="flex items-center text-[11px] text-white">
      <span className="w-[23px] pb-[6px]">EN</span>
      <Svg box={16} className="w-4 h-4"><path d="M1 6h14v8H1z" fill="#d8d4cc" stroke="#bbb" /><path d="M3 8h10M3 10h10M4 12h8" stroke="#555" strokeDasharray="1 1" /><path d="M8 6q0-3 5-4" stroke="#ccc" /></Svg>
      <span className="mx-3 block h-0 w-0 border-x-4 border-b-[5px] border-x-transparent border-b-white" />
      <Svg box={16} className="w-4 h-4"><path d="M3 1v14" stroke="#fff" strokeWidth="2" /><path d="M4 2h5v1h6v6H9V8H4z" fill="#fff" stroke="none" /></Svg>
      <span className="w-[9px]" />
      <Svg box={16} className="w-4 h-4"><g stroke="#fff"><path d="M5 4h10v8H5zM10 12v3M7 15h7" strokeWidth="1.6" /><path d="M1 1v3q0 2 2 2M3 1v3M2 6v9h4" /></g></Svg>
      <span className="w-[7px]" />
      <Svg box={16} className="w-4 h-4"><path d="M1 5h3l4-4v14l-4-4H1z" fill="#fff" stroke="none" /><path d="M10 5q2 3 0 6M12 3q4 5 0 10" stroke="#fff" /></Svg>
      <time className="ml-[14px] w-[64px] text-center leading-4">10:22<br />05.10.2011</time>
      <button aria-label="Show desktop" className="ml-[7px] h-[39px] w-[14px] border border-[#5b7aa6] bg-gradient-to-b from-[#4f75a8] to-[#1b3d70]" />
    </div>
  </div>
);

export default function App() {
  return (
    <div className="flex h-screen flex-col overflow-hidden bg-[#f0f0f0] font-['Open_Sans','Noto_Sans',sans-serif] text-black">
      <header className="shrink-0">
        <div className="flex">
          <button aria-label="Application menu" className="flex h-11 w-[41px] shrink-0 items-start bg-[#9f9f9f]">
            <span className="block h-[41px] w-[41px] border border-[#2c2c2c] bg-gradient-to-b from-[#8f8f8f] via-[#b4b4b4] to-[#858585]">
              <svg viewBox="1 1 39 39" className="h-[39px] w-[39px]">
                <path d="M10 12l5-1 10 17-7-1-5-6-3 10-5-2z" fill="#6d1d5c" />
                <path d="M6 5l10-2q7 1 7 7 0 4-4 6l6 9-5 2-7-9-1-1-2 9-5-1 3-17z" fill="#c66bb4" stroke="#7d2b6c" strokeWidth=".8" />
                <path d="M12 8q6-2 6 2 0 3-7 4z" fill="#9b9b9b" stroke="#7d2b6c" strokeWidth=".8" />
                <path d="M30 18h7l-3 4z" fill="#222" />
                <path d="M32 38l3-6 3 6M33 36h4" fill="none" stroke="#111" strokeWidth="1.4" />
              </svg>
            </span>
          </button>
          <div className="min-w-0 flex-1">
            <TitleBar />
            <TabRow />
          </div>
        </div>
        <Ribbon />
        <div className="h-[31px] border-t-2 border-b-2 border-t-[#9b9b9b] border-b-[#77797c] bg-[#e1e2e4]" />
      </header>
      <div className="flex min-h-0 flex-1 gap-[6px]">
        <aside className="flex min-h-0 shrink-0 flex-col gap-[7px]">
          <PropertiesPane />
          <ProjectBrowser />
        </aside>
        <ViewArea />
      </div>
      <StatusBar />
      <Taskbar />
    </div>
  );
}
